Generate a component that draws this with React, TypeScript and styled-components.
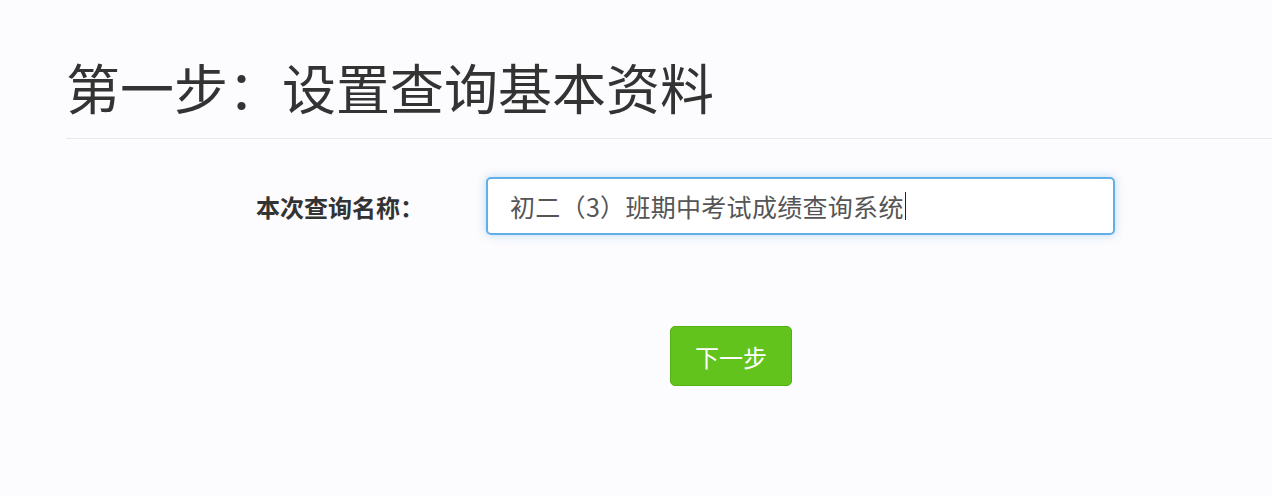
import React from "react";
import styled, { createGlobalStyle } from "styled-components";

const GlobalStyle = createGlobalStyle`
  html, body {
    margin: 0;
    padding: 0;
    background: #fcfbfd;
    font-family: "Noto Sans CJK SC", "Noto Sans", sans-serif;
  }
`;

const Page = styled.div`
  width: 1272px;
  height: 496px;
  overflow: hidden;
  padding-top: 55px;
  box-sizing: border-box;
`;

const Header = styled.div`
  margin-left: 66px;
  border-bottom: 1px solid #e9e8ea;
  padding-bottom: 19px;
`;

const Title = styled.h1`
  margin: 0;
  font-size: 54px;
  line-height: 64px;
  font-weight: 400;
  color: #333;
`;

const FormRow = styled.div`
  display: flex;
  align-items: center;
  margin-top: 38px;
`;

const Label = styled.label`
  width: 486px;
  text-align: right;
  padding-right: 62px;
  box-sizing: border-box;
  font-size: 24px;
  font-weight: 700;
  color: #333;
`;

const Field = styled.div`
  width: 629px;
  height: 58px;
  box-sizing: border-box;
  border: 2px solid #62aee6;
  border-radius: 5px;
  background: #fff;
  box-shadow: 0 0 8px rgba(102, 175, 233, 0.45);
  display: flex;
  align-items: center;
  padding-left: 22px;
  font-size: 25px;
  letter-spacing: 0.3px;
  color: #555;
`;

const Caret = styled.span`
  display: inline-block;
  width: 1px;
  height: 28px;
  background: #222;
  margin-left: 1px;
`;

const Actions = styled.div`
  padding-left: 670px;
  margin-top: 91px;
`;

const NextButton = styled.button`
  width: 122px;
  height: 60px;
  border: 1px solid #53b015;
  border-radius: 5px;
  background: #62c31c;
  color: #fff;
  font-family: inherit;
  font-size: 24px;
  cursor: pointer;
`;

export default function App() {
  return (
    <Page>
      <GlobalStyle />
      <Header>
        <Title>第一步：设置查询基本资料</Title>
      </Header>
      <FormRow>
        <Label>本次查询名称：</Label>
        <Field>
          初二（3）班期中考试成绩查询系统
          <Caret />
        </Field>
      </FormRow>
      <Actions>
        <NextButton>下一步</NextButton>
      </Actions>
    </Page>
  );
}
